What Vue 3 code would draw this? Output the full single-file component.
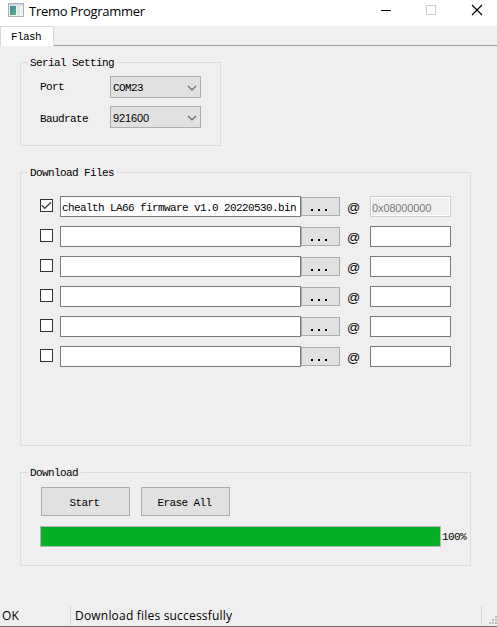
<script setup>
import { ref } from "vue";

const port = ref("COM23");
const baudrate = ref("921600");
const progress = ref(100);
const files = ref([
  {
    checked: true,
    name: "chealth LA66 firmware v1.0 20220530.bin",
    address: "0x08000000",
  },
  { checked: false, name: "", address: "" },
  { checked: false, name: "", address: "" },
  { checked: false, name: "", address: "" },
  { checked: false, name: "", address: "" },
  { checked: false, name: "", address: "" },
]);

const toggle = (file) => {
  file.checked = !file.checked;
};
</script>

<template>
  <div class="window">
    <header class="titlebar">
      <svg class="app-icon" width="16" height="14" viewBox="0 0 16 14">
        <defs>
          <linearGradient id="pane" x1="0" y1="0" x2="1" y2="1">
            <stop offset="0" stop-color="#3f7fa8" />
            <stop offset="1" stop-color="#5fb082" />
          </linearGradient>
        </defs>
        <rect x="0.5" y="0.5" width="15" height="13" fill="#f2f4f4" stroke="#aab0b5" />
        <rect x="1" y="1" width="14" height="1.5" fill="#c9d2da" />
        <rect x="2" y="3" width="6" height="9" fill="url(#pane)" />
        <rect x="9" y="3" width="3" height="9" fill="#dfe7e2" />
      </svg>
      <span class="title">Tremo Programmer</span>
      <svg class="controls" width="112" height="20" viewBox="0 0 112 20">
        <path d="M1 10.5h10" stroke="#000" />
        <rect x="46.5" y="5.5" width="9" height="9" fill="none" stroke="#ccc" />
        <path d="M92 5l10 10M102 5l-10 10" stroke="#000" stroke-width="1.1" />
      </svg>
    </header>

    <nav class="tabs">
      <div class="tab"><span>Flash</span></div>
      <div class="tab-line"></div>
    </nav>

    <main class="content">
      <section class="group serial">
        <h2 class="legend">Serial Setting</h2>
        <div class="setting">
          <label>Port</label>
          <div class="combo">
            <span>{{ port }}</span>
            <svg width="10" height="6" viewBox="0 0 10 6">
              <path d="M1 1l4 4 4-4" fill="none" stroke="#666" stroke-width="1.2" />
            </svg>
          </div>
        </div>
        <div class="setting">
          <label class="lower">Baudrate</label>
          <div class="combo">
            <span class="digits">{{ baudrate }}</span>
            <svg width="10" height="6" viewBox="0 0 10 6">
              <path d="M1 1l4 4 4-4" fill="none" stroke="#666" stroke-width="1.2" />
            </svg>
          </div>
        </div>
      </section>

      <section class="group files">
        <h2 class="legend">Download Files</h2>
        <div v-for="(file, index) in files" :key="index" class="file-row">
          <div class="checkbox" @click="toggle(file)">
            <svg v-if="file.checked" width="11" height="11" viewBox="0 0 11 11">
              <path d="M0.8 5.3l3 3L10 2.2" fill="none" stroke="#444" stroke-width="1.3" />
            </svg>
          </div>
          <div class="field name">{{ file.name }}</div>
          <button class="btn browse"><i></i><i></i><i></i></button>
          <span class="at">@</span>
          <div class="field address digits" :class="{ disabled: file.checked }">
            {{ file.address }}
          </div>
        </div>
      </section>

      <section class="group download">
        <h2 class="legend">Download</h2>
        <div class="actions">
          <button class="btn action">Start</button>
          <button class="btn action">Erase All</button>
        </div>
        <div class="progress-row">
          <div class="progress">
            <div class="bar" :style="{ width: progress + '%' }"></div>
          </div>
          <span class="percent">{{ progress }}%</span>
        </div>
      </section>
    </main>

    <footer class="statusbar">
      <span class="state">OK</span>
      <span class="message">Download files successfully</span>
      <svg class="grip" width="8" height="8" viewBox="0 0 8 8" fill="#bfbfbf">
        <path d="M6 0h2v2H6zM3 3h2v2H3zM6 3h2v2H6zM0 6h2v2H0zM3 6h2v2H3zM6 6h2v2H6z" />
      </svg>
    </footer>
  </div>
</template>

<style>
body {
  margin: 0;
}
</style>

<style scoped>
.window {
  display: flex;
  flex-direction: column;
  width: 497px;
  height: 627px;
  overflow: hidden;
  box-sizing: border-box;
  border-bottom: 1px solid #6e6e6e;
  background-color: #efefef;
  color: #000;
  font-family: "Liberation Mono", monospace;
  font-size: 11px;
  letter-spacing: -0.6px;
  line-height: 14px;
  white-space: pre;
}
.window * {
  box-sizing: border-box;
}
.titlebar {
  display: flex;
  flex: none;
  height: 26px;
  padding-left: 8px;
  background-color: #fff;
}
.app-icon {
  flex: none;
  margin-top: 3px;
}
.title {
  width: 356px;
  padding-left: 5px;
  font-family: "Open Sans", sans-serif;
  font-size: 13px;
  letter-spacing: -0.28px;
  line-height: 22px;
}
.controls {
  flex: none;
}
.tabs {
  display: flex;
  flex: none;
  height: 20px;
}
.tab {
  width: 54px;
  padding: 3px 0 0 10px;
  border: 1px solid #d9d9d9;
  border-bottom: none;
  background-color: #fff;
}
.tab-line {
  flex: 1;
  border-bottom: 1px solid #a0a0a0;
}
.content {
  display: flex;
  flex-direction: column;
  flex: 1;
  gap: 26px;
  padding: 16px 26px 0 20px;
}
.group {
  border: 1px solid #dcdcdc;
}
.legend {
  width: max-content;
  height: 14px;
  margin: -8px 0 0 7px;
  padding: 1px 3px 0 2px;
  background-color: #efefef;
  font-size: 11px;
  font-weight: normal;
}
.serial {
  width: 201px;
  height: 84px;
}
.setting {
  display: flex;
  height: 22px;
  margin: 7px 0 8px 19px;
}
.setting + .setting {
  margin-top: 8px;
}
.setting label {
  width: 70px;
  padding-top: 4px;
}
.setting .lower {
  padding-top: 6px;
}
.combo {
  display: flex;
  align-items: center;
  justify-content: space-between;
  width: 91px;
  padding: 1px 3px 0 2px;
  border: 1px solid #adadad;
  background-color: #e1e1e1;
}
.digits {
  font-family: "Liberation Sans", sans-serif;
  font-size: 11px;
  letter-spacing: -0.12px;
}
.files {
  height: 274px;
}
.files .legend {
  margin-bottom: 17px;
}
.file-row {
  display: flex;
  height: 21px;
  margin: 0 0 9px 19px;
}
.checkbox {
  flex: none;
  width: 13px;
  height: 13px;
  margin: 3px 7px 0 0;
  border: 1px solid #333;
  background-color: #fff;
}
.checkbox svg {
  display: block;
}
.field {
  flex: none;
  height: 21px;
  padding: 4px 0 0 1px;
  border: 1px solid #7a7a7a;
  background-color: #fff;
}
.name {
  width: 241px;
}
.address {
  width: 81px;
}
.disabled {
  border-color: #ccc;
  background-color: #efefef;
  box-shadow: inset 0 0 0 1px #fff;
  color: #7a7a7a;
}
.btn {
  flex: none;
  padding: 0;
  border: 1px solid #adadad;
  background-color: #e1e1e1;
  color: #000;
  font: inherit;
  letter-spacing: inherit;
}
.browse {
  display: flex;
  gap: 5px;
  width: 39px;
  height: 19px;
  margin-top: 1px;
  padding: 11px 0 0 9px;
}
.browse i {
  width: 2px;
  height: 2px;
  background-color: #000;
}
.at {
  width: 30px;
  padding: 3px 0 0 7px;
  font-family: "Liberation Sans", sans-serif;
  font-size: 13px;
  letter-spacing: 0;
  line-height: 17px;
}
.download {
  height: 94px;
}
.actions {
  display: flex;
  gap: 11px;
  margin: 8px 0 10px 20px;
}
.action {
  width: 89px;
  height: 29px;
  padding: 2px 2px 0 0;
}
.progress-row {
  display: flex;
  margin-left: 19px;
}
.progress {
  width: 401px;
  height: 21px;
  border: 1px solid #b5b5b5;
  background-color: #e6e6e6;
}
.bar {
  height: 100%;
  background-color: #06b025;
}
.percent {
  padding: 4px 0 0 1px;
}
.statusbar {
  display: flex;
  flex: none;
  height: 20px;
  font-family: "Open Sans", sans-serif;
  font-size: 12px;
  letter-spacing: 0.2px;
  line-height: 20px;
}
.state {
  width: 71px;
  height: 19px;
  padding-left: 2px;
  border-right: 1px solid #d7d7d7;
}
.message {
  width: 411px;
  height: 19px;
  padding-left: 4px;
  border-right: 1px solid #d7d7d7;
}
.grip {
  margin: 10px 0 0 7px;
}
</style>
